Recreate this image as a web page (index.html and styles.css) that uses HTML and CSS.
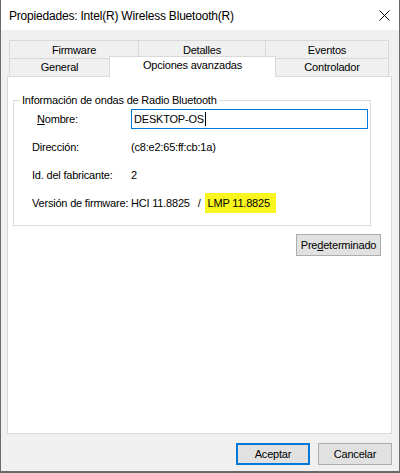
FILE: index.html
```html
<!DOCTYPE html>
<html lang="es">
<head>
<meta charset="utf-8">
<title>Propiedades</title>
<link rel="stylesheet" href="styles.css">
</head>
<body>
<div class="window">
  <div class="titlebar">
    <span class="title">Propiedades: Intel(R) Wireless Bluetooth(R)</span>
    <svg class="close" width="11" height="11" viewBox="0 0 11 11"><path d="M0.5 0.5 L10.5 10.5 M10.5 0.5 L0.5 10.5" stroke="#000" stroke-width="1" fill="none"/></svg>
  </div>
  <div class="content">
    <div class="tabs">
      <div class="tabrow back">
        <div class="tab t1">Firmware</div>
        <div class="tab t2">Detalles</div>
        <div class="tab t3">Eventos</div>
      </div>
      <div class="tabrow front">
        <div class="tab t4">General</div>
        <div class="tab t5 selected">Opciones avanzadas</div>
        <div class="tab t6">Controlador</div>
      </div>
    </div>
    <div class="panel">
      <div class="group">
        <div class="legend">Información de ondas de Radio Bluetooth</div>
        <div class="row">
          <div class="label first"><u>N</u>ombre:</div>
          <div class="value"><div class="textbox">DESKTOP-OS<span class="caret"></span></div></div>
        </div>
        <div class="row">
          <div class="label">Dirección:</div>
          <div class="value">(c8:e2:65:ff:cb:1a)</div>
        </div>
        <div class="row">
          <div class="label">Id. del fabricante:</div>
          <div class="value">2</div>
        </div>
        <div class="row">
          <div class="label">Versión de firmware:</div>
          <div class="value"><span>HCI 11.8825</span><span class="slash">/</span><span class="hl">LMP 11.8825</span></div>
        </div>
      </div>
      <div class="btn default-btn">Pre<u>d</u>eterminado</div>
    </div>
    <div class="footer">
      <div class="btn ok">Aceptar</div>
      <div class="btn">Cancelar</div>
    </div>
  </div>
</div>
</body>
</html>
```
FILE: styles.css
```css
html, body {
  margin: 0;
  padding: 0;
}
body {
  width: 400px;
  height: 473px;
  overflow: hidden;
  font-family: "Liberation Sans", Arial, sans-serif;
  font-size: 11px;
  letter-spacing: -0.2px;
  color: #000;
  background: #fff;
}
.window {
  box-sizing: border-box;
  width: 400px;
  height: 473px;
  border-left: 1px solid #6a6a6a;
  border-right: 1px solid #6a6a6a;
  border-bottom: 2px solid #6a6a6a;
  display: flex;
  flex-direction: column;
}
.titlebar {
  box-sizing: border-box;
  height: 30px;
  background: #fff;
  display: flex;
  align-items: center;
  justify-content: space-between;
  padding: 2px 9px 0 8px;
}
.title {
  font-size: 12px;
  letter-spacing: -0.2px;
}
.close {
  display: block;
  margin-top: -1px;
}
.content {
  flex: 1;
  background: #f0f0f0;
  display: flex;
  flex-direction: column;
  padding: 10px 7px 6px 6px;
}
.tabs {
  margin: 0 3px 0 2px;
}
.tabrow {
  display: flex;
  height: 18px;
}
.tab {
  box-sizing: border-box;
  height: 18px;
  border: 1px solid #d9d9d9;
  border-bottom: none;
  background: #f0f0f0;
  text-align: center;
  line-height: 17px;
  margin-left: -1px;
}
.tab.t1, .tab.t4 {
  margin-left: 0;
}
.t1 { width: 130px; }
.t2 { width: 128px; }
.t3 { width: 124px; }
.t4 { width: 101px; }
.t5 { width: 167px; }
.t6 { width: 114px; }
.back .tab {
  line-height: 18px;
}
.tab.selected {
  position: relative;
  z-index: 1;
  background: #fff;
  height: 21px;
  margin-top: -2px;
  line-height: 17px;
}
.panel {
  flex: 1;
  background: #fff;
  border: 1px solid #d9d9d9;
  display: flex;
  flex-direction: column;
  align-items: flex-start;
}
.group {
  box-sizing: border-box;
  width: 358px;
  margin: 23px 0 0 5px;
  border: 1px solid #dcdcdc;
  padding-bottom: 8px;
}
.legend {
  width: fit-content;
  background: #fff;
  line-height: 15px;
  margin: -8px 0 -3px 6px;
  padding: 0 2px;
}
.row {
  display: flex;
  align-items: center;
  height: 28px;
}
.label {
  box-sizing: border-box;
  width: 117px;
  padding-left: 18px;
}
.label.first {
  padding-left: 23px;
}
.value {
  flex: 1;
  display: flex;
  align-items: center;
}
.textbox {
  box-sizing: border-box;
  width: 237px;
  height: 20px;
  border: 1px solid #0078d7;
  padding-left: 2px;
  line-height: 18px;
  display: flex;
  align-items: center;
}
.caret {
  display: inline-block;
  width: 1px;
  height: 14px;
  background: #000;
  margin-left: 1px;
}
.slash {
  margin-left: 8px;
  margin-right: 4px;
}
.hl {
  background: #f9f51e;
  line-height: 20px;
  padding: 0 6px 0 3px;
}
.btn {
  box-sizing: border-box;
  width: 74px;
  height: 22px;
  border: 1px solid #adadad;
  background: #e1e1e1;
  text-align: center;
  line-height: 20px;
}
.default-btn {
  width: 85px;
  align-self: flex-end;
  margin: 8px 10px 0 0;
}
.footer {
  display: flex;
  justify-content: flex-end;
  gap: 8px;
  margin-top: 9px;
}
.btn.ok {
  border: 2px solid #0078d7;
  line-height: 18px;
}
```
